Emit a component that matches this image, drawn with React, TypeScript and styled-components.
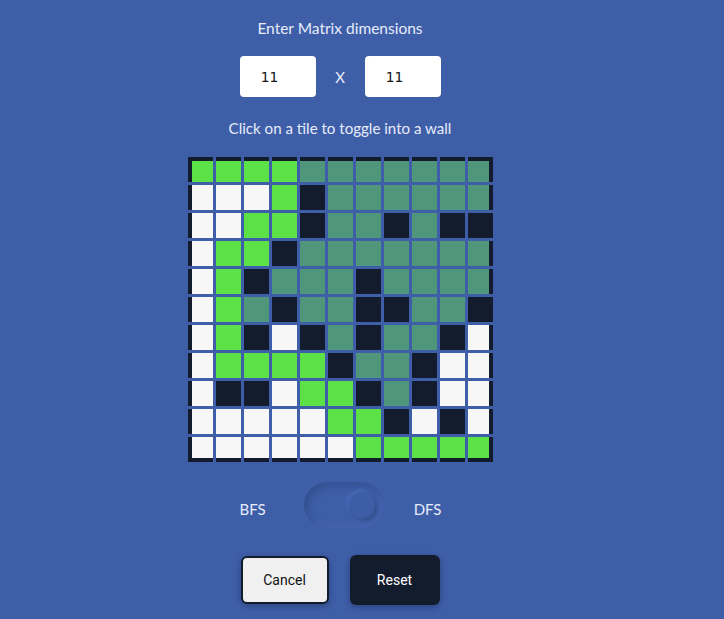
import React, { useState } from "react";
import styled, { createGlobalStyle } from "styled-components";

const BG = "#3e5ea8";
const DARK = "#131c2d";

const Global = createGlobalStyle`
  html, body { margin: 0; padding: 0; background: ${BG}; }
  body { font-family: Lato, "Noto Sans", sans-serif; }
`;

const Page = styled.div`
  width: 680px;
  min-height: 619px;
  display: flex;
  flex-direction: column;
  align-items: center;
  padding-top: 18px;
  box-sizing: border-box;
`;

const Label = styled.div<{ $mt?: number; $size?: number }>`
  color: #e6ecfa;
  font-size: ${(p) => p.$size ?? 15.5}px;
  line-height: 20px;
  margin-top: ${(p) => p.$mt ?? 0}px;
`;

const DimRow = styled.div`
  display: flex;
  align-items: center;
  margin-top: 18px;
`;

const DimInput = styled.input`
  width: 76px;
  height: 41px;
  box-sizing: border-box;
  border: none;
  border-radius: 4px;
  background: #fff;
  padding: 0 0 0 21px;
  font-family: "DejaVu Sans Mono", monospace;
  font-size: 14.5px;
  color: #1a1a1a;
  outline: none;
`;

const Times = styled.span`
  width: 49px;
  text-align: center;
  color: #e6ecfa;
  font-size: 15px;
`;

const Grid = styled.div`
  display: grid;
  grid-template-columns: repeat(11, 25px);
  grid-auto-rows: 25px;
  gap: 3px;
  margin-top: 19px;
`;

const COLORS: Record<string, string> = {
  G: "#5ce246",
  T: "#4f967a",
  D: DARK,
  W: "#f7f7f7",
};

const Tile = styled.div<{ $c: string; $t: boolean; $l: boolean; $r: boolean; $b: boolean }>`
  box-sizing: border-box;
  background: ${(p) => COLORS[p.$c]};
  border-style: solid;
  border-color: ${DARK};
  border-width: ${(p) => `${p.$t ? 4 : 0}px ${p.$r ? 4 : 0}px ${p.$b ? 4 : 0}px ${p.$l ? 4 : 0}px`};
  cursor: pointer;
`;

const ToggleRow = styled.div`
  display: flex;
  align-items: center;
  margin-top: 20px;
  margin-left: 1px;
`;

const Algo = styled.span<{ $gap: number; $side: "l" | "r" }>`
  color: #e6ecfa;
  font-size: 15px;
  padding-top: 8px;
  ${(p) => (p.$side === "l" ? `margin-right: ${p.$gap}px;` : `margin-left: ${p.$gap}px;`)}
`;

const Track = styled.div`
  position: relative;
  width: 80px;
  height: 46px;
  border-radius: 23px;
  background: ${BG};
  box-shadow: inset 4px 4px 8px #33508f, inset -4px -4px 8px #4866b3;
`;

const Knob = styled.div`
  position: absolute;
  right: 9px;
  top: 10px;
  width: 26px;
  height: 26px;
  border-radius: 50%;
  background: #3d5da6;
  box-shadow: 3px 3px 4px #34518f, -2px -2px 4px #4a6ab9;
`;

const Buttons = styled.div`
  display: flex;
  gap: 21px;
  align-items: center;
  margin-top: 27px;
`;

const Btn = styled.button<{ $dark?: boolean }>`
  width: ${(p) => (p.$dark ? 90 : 88)}px;
  height: ${(p) => (p.$dark ? 50 : 48)}px;
  border-radius: 6px;
  font-family: Roboto, Arial, sans-serif;
  font-size: 14px;
  cursor: pointer;
  box-shadow: 0 2px 6px rgba(10, 20, 50, 0.35);
  background: ${(p) => (p.$dark ? DARK : "#f0f0f0")};
  color: ${(p) => (p.$dark ? "#fff" : "#111")};
  border: ${(p) => (p.$dark ? "none" : `2px solid ${DARK}`)};
`;

const MATRIX = [
  "GGGGTTTTTTT",
  "WWWGDTTTTTT",
  "WWGGDTTDTDD",
  "WGGDTTTTTTT",
  "WGDTTTDTTTT",
  "WGTDTTDDTTD",
  "WGDWDTDTTDW",
  "WGGGGDTTDWW",
  "WDDWGGDTDWW",
  "WWWWWGGDWDW",
  "WWWWWWGGGGG",
];

export default function App() {
  const [rows, setRows] = useState("11");
  const [cols, setCols] = useState("11");
  const [grid, setGrid] = useState(MATRIX.map((r) => r.split("")));
  const toggle = (r: number, c: number) =>
    setGrid((g) => g.map((row, ri) => row.map((v, ci) => (ri === r && ci === c ? (v === "D" ? "W" : "D") : v))));
  return (
    <>
      <Global />
      <Page>
        <Label>Enter Matrix dimensions</Label>
        <DimRow>
          <DimInput value={rows} onChange={(e) => setRows(e.target.value)} />
          <Times>X</Times>
          <DimInput value={cols} onChange={(e) => setCols(e.target.value)} />
        </DimRow>
        <Label $mt={21} $size={15.1}>Click on a tile to toggle into a wall</Label>
        <Grid>
          {grid.map((row, r) =>
            row.map((c, ci) => (
              <Tile
                key={`${r}-${ci}`}
                $c={c}
                $t={r === 0}
                $b={r === 10}
                $l={ci === 0}
                $r={ci === 10}
                onClick={() => toggle(r, ci)}
              />
            ))
          )}
        </Grid>
        <ToggleRow>
          <Algo $side="l" $gap={38}>BFS</Algo>
          <Track>
            <Knob />
          </Track>
          <Algo $side="r" $gap={30}>DFS</Algo>
        </ToggleRow>
        <Buttons>
          <Btn>Cancel</Btn>
          <Btn $dark>Reset</Btn>
        </Buttons>
      </Page>
    </>
  );
}
